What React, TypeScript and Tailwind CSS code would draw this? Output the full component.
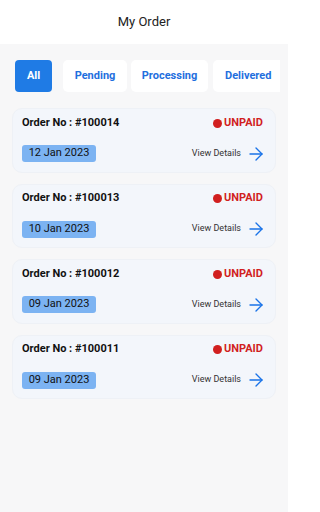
import React from "react";

const orders = [
  { no: "#100014", date: "12 Jan 2023" },
  { no: "#100013", date: "10 Jan 2023" },
  { no: "#100012", date: "09 Jan 2023" },
  { no: "#100011", date: "09 Jan 2023" },
];

function Arrow() {
  return (
    <svg width="14" height="14" viewBox="0 0 14 14" fill="none" stroke="#1a73e8" strokeWidth="1.4" strokeLinecap="round" strokeLinejoin="round">
      <path d="M1 7h12" />
      <path d="M7 1l6 6-6 6" />
    </svg>
  );
}

export default function App() {
  return (
    <div className="w-[288px] h-[512px] bg-[#f7f7f8] overflow-hidden" style={{ fontFamily: 'Roboto, "Noto Sans", sans-serif' }}>
      <div className="h-[44px] bg-white flex items-center justify-center text-[13px] text-[#222]">
        My Order
      </div>
      <div className="flex items-center h-[32px] mt-[16px] pl-[15px] w-[280px] overflow-hidden">
        <div className="shrink-0 h-full w-[37px] mr-[11px] bg-[#1f7be5] rounded-[4px] flex items-center justify-center text-white text-[11px] font-bold">All</div>
        <div className="shrink-0 h-full w-[64px] mr-[4px] bg-white rounded-[5px] flex items-center justify-center text-[#1f6fde] text-[11px] font-bold">Pending</div>
        <div className="shrink-0 h-full w-[77px] mr-[5px] bg-white rounded-[5px] flex items-center justify-center text-[#1f6fde] text-[11px] font-bold">Processing</div>
        <div className="shrink-0 h-full w-[79px] bg-white rounded-l-[5px] flex items-center pl-[12px] text-[#1f6fde] text-[11px] font-bold">Delivered</div>
      </div>
      <div className="flex flex-col gap-[11px] mt-[16px] px-[12px]">
        {orders.map((o) => (
          <div key={o.no} className="h-[64.5px] bg-[#f3f6fb] rounded-[10px] border border-[#eef1f6] pl-[9px] pr-[12px] pt-[5px]">
            <div className="flex items-center justify-between h-[18px]">
              <span className="text-[11px] font-bold text-[#111]">Order No : {o.no}</span>
              <span className="flex items-center gap-[2px] text-[11px] font-bold text-[#d11f1f]">
                <span className="w-[9px] h-[9px] rounded-full bg-[#d11f1f]" />
                UNPAID
              </span>
            </div>
            <div className="flex items-center justify-between mt-[13px]">
              <span className="h-[17px] w-[74px] rounded-[3px] bg-[#7cb3f2] flex items-center justify-center text-[11px] text-[#111]">{o.date}</span>
              <span className="flex items-center gap-[8px] text-[9px] text-[#333]">
                View Details
                <Arrow />
              </span>
            </div>
          </div>
        ))}
      </div>
    </div>
  );
}
